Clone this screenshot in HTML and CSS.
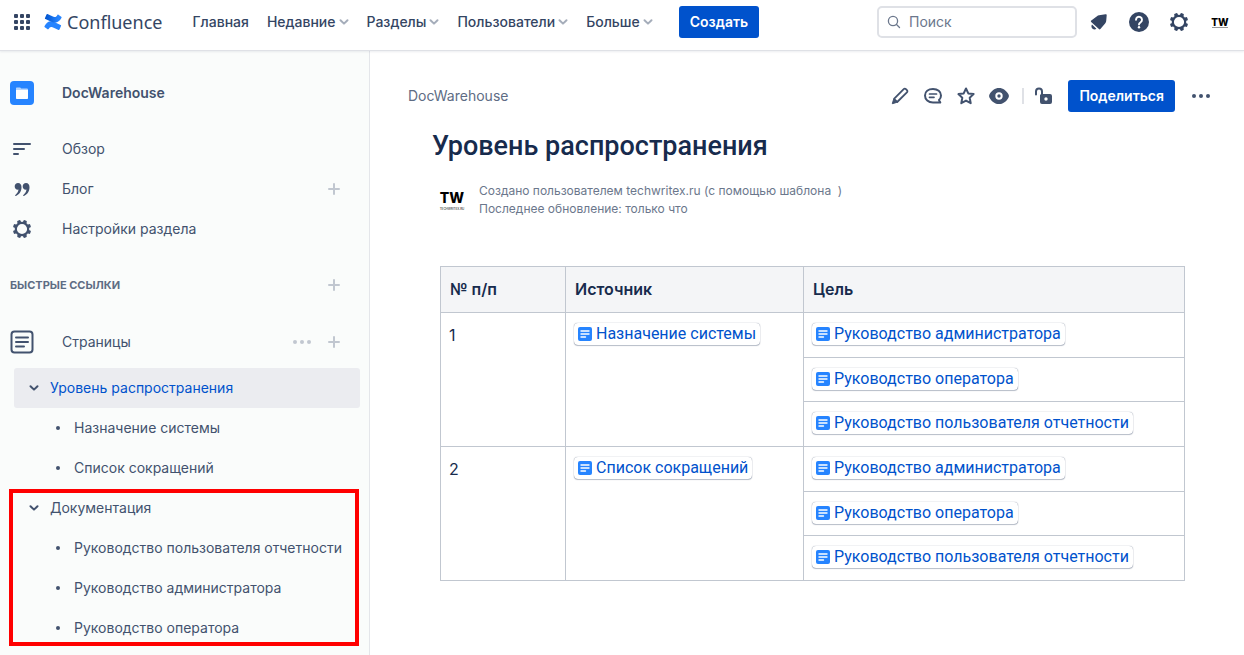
FILE: index.html
```
<!DOCTYPE html>
<html lang="ru">
<head>
<meta charset="utf-8">
<meta name="viewport" content="width=device-width, initial-scale=1">
<title>Уровень распространения – DocWarehouse – Confluence</title>
<link rel="stylesheet" href="styles.css">
</head>
<body>
<svg class="defs" aria-hidden="true">
  <symbol id="i-chevron" viewBox="0 0 10 10"><path d="M1.5 3.2 5 6.6 8.5 3.2" fill="none" stroke="currentColor" stroke-width="2" stroke-linecap="round" stroke-linejoin="round"/></symbol>
  <symbol id="i-gear" viewBox="0 0 24 24"><circle cx="12" cy="12" r="6.200" fill="none" stroke="currentColor" stroke-width="2.200"/><g fill="currentColor"><g id="teeth"><rect x="10.200" y="2.800" width="3.600" height="3.600" rx="1.100" transform="rotate(22.500 12 12)"/><rect x="10.200" y="2.800" width="3.600" height="3.600" rx="1.100" transform="rotate(67.500 12 12)"/><rect x="10.200" y="2.800" width="3.600" height="3.600" rx="1.100" transform="rotate(112.500 12 12)"/><rect x="10.200" y="2.800" width="3.600" height="3.600" rx="1.100" transform="rotate(157.500 12 12)"/></g><use href="#teeth" transform="rotate(180 12 12)"/></g></symbol>
  <symbol id="i-plus" viewBox="0 0 14 14"><path d="M7 2v10M2 7h10" stroke="currentColor" stroke-width="2" stroke-linecap="round"/></symbol>
  <symbol id="i-dots" viewBox="0 0 20 6"><g fill="currentColor"><circle cx="3" cy="3" r="2"/><circle cx="10" cy="3" r="2"/><circle cx="17" cy="3" r="2"/></g></symbol>
  <symbol id="i-page" viewBox="0 0 14 14"><rect width="14" height="14" rx="2" fill="#2684ff"/><path d="M3 4h8M3 7h8M3 10h4.5" stroke="#fff" stroke-width="1.4" stroke-linecap="round"/></symbol>
</svg>

<header class="topbar">
  <button class="icon-btn" aria-label="Приложения">
    <svg width="16" height="16" viewBox="0 0 16 16" fill="#344563"><rect width="4" height="4" rx="1"/><rect x="6" width="4" height="4" rx="1"/><rect x="12" width="4" height="4" rx="1"/><rect y="6" width="4" height="4" rx="1"/><rect x="6" y="6" width="4" height="4" rx="1"/><rect x="12" y="6" width="4" height="4" rx="1"/><rect y="12" width="4" height="4" rx="1"/><rect x="6" y="12" width="4" height="4" rx="1"/><rect x="12" y="12" width="4" height="4" rx="1"/></svg>
  </button>
  <a class="brand" href="#">
    <svg width="18" height="16" viewBox="0 0 18 16"><defs><linearGradient id="g1" x1="0" x2="1"><stop offset="0" stop-color="#0052cc"/><stop offset=".8" stop-color="#2684ff"/></linearGradient></defs><path d="M.6 11.900C3 8 5.600 6.200 10.200 8.100l6.400 2.800c.4.2.6.6.4 1l-1.500 3.600c-.2.4-.6.6-1 .4-2.200-.9-4.200-1.900-6-2.600-2-.8-2.700-.2-3.900 1.700-.3.4-.7.5-1 .3L.8 13.200c-.5-.3-.5-.8-.2-1.300z" fill="#2684ff"/><path d="M17.400 4.100C15 8 12.400 9.800 7.800 7.900L1.400 5.100c-.4-.2-.6-.6-.4-1L2.500.5c.2-.4.6-.6 1-.4 2.200.9 4.200 1.900 6 2.600 2 .8 2.700.2 3.900-1.700.3-.4.7-.5 1-.3l2.800 2.100c.5.3.5.8.2 1.300z" fill="url(#g1)"/></svg>
    <span>Confluence</span>
  </a>
  <nav class="topnav" aria-label="Основная навигация">
    <a href="#">Главная</a>
    <button>Недавние<svg class="chev"><use href="#i-chevron"/></svg></button>
    <button>Разделы<svg class="chev"><use href="#i-chevron"/></svg></button>
    <button>Пользователи<svg class="chev"><use href="#i-chevron"/></svg></button>
    <button>Больше<svg class="chev"><use href="#i-chevron"/></svg></button>
  </nav>
  <button class="primary">Создать</button>
  <div class="tools">
    <label class="search">
      <svg width="14" height="14" viewBox="0 0 14 14" fill="none" stroke="#6b778c" stroke-width="1.300" stroke-linecap="round"><circle cx="6" cy="6" r="4.600"/><path d="m9.500 9.500 3 3"/></svg>
      <input type="text" placeholder="Поиск" aria-label="Поиск">
    </label>
    <button class="icon-btn" aria-label="Уведомления"><svg width="20" height="20" viewBox="0 0 20 20" fill="currentColor"><path d="M16.500 2.200c.8-.1 1.300.3 1.200 1.100l-.5 5.700c-.1 1-.4 1.700-1.100 2.400l-4.700 5.600c-.5.600-1 .6-1.500.1L2.200 9.900c-.5-.5-.5-1 .1-1.400L8 4.200c.6-.5 1.300-.8 2.100-.9zM3 12.400l4.400 4.400c-1.100 1.100-2.800 1-3.800 0-1.200-1.100-1.600-3.200-.6-4.400z"/></svg></button>
    <button class="icon-btn" aria-label="Справка"><svg width="20" height="20" viewBox="0 0 20 20"><circle cx="10" cy="10" r="10" fill="currentColor"/><path d="M7 7.700a3 3 0 1 1 4.700 2.500c-1.100.8-1.700 1.100-1.700 2.300" fill="none" stroke="#fff" stroke-width="1.900" stroke-linecap="round"/><circle cx="10" cy="15.200" r="1.200" fill="#fff"/></svg></button>
    <button class="icon-btn" aria-label="Настройки"><svg width="24" height="24"><use href="#i-gear"/></svg></button>
    <button class="avatar avatar-small" aria-label="Профиль"><b>TW</b><i></i></button>
  </div>
</header>

<div class="layout">
  <aside class="sidebar">
    <a class="side-row space" href="#">
      <svg width="24" height="24" viewBox="0 0 24 24"><rect width="24" height="24" rx="4" fill="#2684ff"/><path d="M6 8V7.300c0-.4.3-.7.700-.7h3.500l1 1H17c.6 0 1 .3 1 .8V9H6z" fill="#b3d4ff"/><path d="M6 9h12v8c0 .6-.4 1-1 1H7c-.6 0-1-.4-1-1z" fill="#fff"/></svg>
      <span>DocWarehouse</span>
    </a>
    <nav class="side-group" aria-label="Раздел">
      <div class="side-row"><svg width="24" height="24" viewBox="0 0 24 24"><path d="M4 7h16M4 12h10M4 17h4" stroke="currentColor" stroke-width="2" stroke-linecap="round"/></svg><a href="#">Обзор</a></div>
      <div class="side-row"><svg width="24" height="24" viewBox="0 0 24 24" fill="currentColor"><path id="q" d="M8 6c2.300 0 3.500 1.700 3.500 4.300 0 4.300-2.400 7.300-5.500 8.600-.7.200-1.200-.4-.6-1 2-1.700 3-3.300 3-5.300-2.200.3-3.700-1.100-3.700-3.200S6.100 6 8 6z"/><use href="#q" x="8"/></svg><a href="#">Блог</a><button class="add" aria-label="Создать запись блога"><svg width="14" height="14"><use href="#i-plus"/></svg></button></div>
      <div class="side-row"><svg width="24" height="24"><use href="#i-gear"/></svg><a href="#">Настройки раздела</a></div>
    </nav>
    <div class="side-group side-row"><h2>Быстрые ссылки</h2><button class="add" aria-label="Добавить ссылку"><svg width="14" height="14"><use href="#i-plus"/></svg></button></div>
    <div class="side-group side-row pages">
      <svg width="24" height="24" viewBox="0 0 24 24" fill="none" stroke="currentColor" stroke-width="2" stroke-linecap="round"><rect x="1.500" y="1.500" width="21" height="21" rx="3"/><path d="M6 7.500h12M6 12h12M6 16.500h8"/></svg>
      <a href="#">Страницы</a>
      <button class="add" aria-label="Другие действия"><svg width="20" height="6"><use href="#i-dots"/></svg></button>
      <button class="add next" aria-label="Создать страницу"><svg width="14" height="14"><use href="#i-plus"/></svg></button>
    </div>
    <ul class="tree">
      <li>
        <div class="node current"><button aria-label="Свернуть"><svg class="chev"><use href="#i-chevron"/></svg></button><a href="#">Уровень распространения</a></div>
        <ul>
          <li class="node leaf"><a href="#">Назначение системы</a></li>
          <li class="node leaf"><a href="#">Список сокращений</a></li>
        </ul>
      </li>
      <li class="marked">
        <div class="node"><button aria-label="Свернуть"><svg class="chev"><use href="#i-chevron"/></svg></button><a href="#">Документация</a></div>
        <ul>
          <li class="node leaf"><a href="#">Руководство пользователя отчетности</a></li>
          <li class="node leaf"><a href="#">Руководство администратора</a></li>
          <li class="node leaf"><a href="#">Руководство оператора</a></li>
        </ul>
      </li>
    </ul>
  </aside>

  <main class="main">
    <div class="pagebar">
      <a class="crumb" href="#">DocWarehouse</a>
      <div class="actions">
        <button class="icon-btn" aria-label="Редактировать"><svg width="20" height="20" viewBox="0 0 20 20" fill="none" stroke="currentColor" stroke-width="1.800" stroke-linejoin="round"><path d="M4 12.800 13.700 3.100c.7-.7 1.500-.7 2.200 0l1 1c.7.7.7 1.500 0 2.200L7.200 16z"/><path d="M3.600 13.300 2.300 17.700l4.400-1.300z" fill="currentColor" stroke-width="1"/></svg></button>
        <button class="icon-btn" aria-label="Комментарии"><svg width="20" height="20" viewBox="0 0 20 20" fill="none" stroke="currentColor" stroke-width="2" stroke-linecap="round" stroke-linejoin="round"><path d="M10 3c4.700 0 8 2.700 8 6.500 0 1.900-.8 3.500-2 4.600l1.300 2.400H10c-4.700 0-8-2.900-8-7S5.300 3 10 3z"/><path d="M6.500 8h7M6.500 11.300h4.500" stroke-width="1.700"/></svg></button>
        <button class="icon-btn" aria-label="В избранное"><svg width="20" height="20" viewBox="0 0 20 20" fill="none" stroke="currentColor" stroke-width="2" stroke-linejoin="round"><path d="m10 2.500 2.300 4.900 5.300.7-3.900 3.700 1 5.400-4.700-2.600-4.700 2.600 1-5.400L2.400 8.100l5.300-.7z"/></svg></button>
        <button class="icon-btn" aria-label="Отслеживать"><svg width="20" height="20" viewBox="0 0 20 20"><path d="M10 2c4.200 0 7.300 2.700 9.300 6.100.8 1.300.8 2.500 0 3.800-2 3.400-5.100 6.100-9.300 6.100S2.700 15.300.7 11.900c-.8-1.300-.8-2.500 0-3.800C2.700 4.700 5.800 2 10 2z" fill="currentColor"/><circle cx="10" cy="10" r="2.700" fill="none" stroke="#fff" stroke-width="2"/></svg></button>
        <span class="divider"></span>
        <button class="icon-btn" aria-label="Ограничения"><svg width="20" height="20" viewBox="0 0 20 20"><path d="M3 8.500V5.500a3 3 0 0 1 6 0V9" fill="none" stroke="currentColor" stroke-width="2" stroke-linecap="round"/><path fill-rule="evenodd" d="M8 8h9a2 2 0 0 1 2 2v6a2 2 0 0 1-2 2H9a2 2 0 0 1-2-2V9zm5 3.300a1.700 1.700 0 1 0 0 3.400 1.700 1.700 0 0 0 0-3.400z" fill="currentColor"/></svg></button>
        <button class="primary">Поделиться</button>
        <button class="icon-btn" aria-label="Ещё"><svg width="20" height="6"><use href="#i-dots"/></svg></button>
      </div>
    </div>
    <article class="content">
      <h1>Уровень распространения</h1>
      <div class="byline">
        <div class="avatar"><b>TW</b><small>TECHWRITEX.RU</small></div>
        <p>Создано пользователем techwritex.ru (с помощью шаблона&nbsp; )<br>Последнее обновление: только что</p>
      </div>
      <table>
        <colgroup><col class="c-num"><col class="c-src"><col></colgroup>
        <thead><tr><th scope="col">№ п/п</th><th scope="col">Источник</th><th scope="col">Цель</th></tr></thead>
        <tbody>
          <tr><td rowspan="3">1</td><td rowspan="3"><a class="chip" href="#"><svg><use href="#i-page"/></svg>Назначение системы</a></td><td><a class="chip" href="#"><svg><use href="#i-page"/></svg>Руководство администратора</a></td></tr>
          <tr class="tight"><td><a class="chip" href="#"><svg><use href="#i-page"/></svg>Руководство оператора</a></td></tr>
          <tr><td><a class="chip" href="#"><svg><use href="#i-page"/></svg>Руководство пользователя отчетности</a></td></tr>
          <tr><td rowspan="3">2</td><td rowspan="3"><a class="chip" href="#"><svg><use href="#i-page"/></svg>Список сокращений</a></td><td><a class="chip" href="#"><svg><use href="#i-page"/></svg>Руководство администратора</a></td></tr>
          <tr class="tight"><td><a class="chip" href="#"><svg><use href="#i-page"/></svg>Руководство оператора</a></td></tr>
          <tr><td><a class="chip" href="#"><svg><use href="#i-page"/></svg>Руководство пользователя отчетности</a></td></tr>
        </tbody>
      </table>
    </article>
  </main>
</div>
</body>
</html>
```
FILE: styles.css
```
* { box-sizing: border-box; }
body {
  margin: 0;
  min-height: 100vh;
  display: flex;
  flex-direction: column;
  background: #fff;
  color: #172b4d;
  font: 14px/20px Inter, "Noto Sans", sans-serif;
}
h1, h2, p, ul { margin: 0; padding: 0; }
ul { list-style: none; }
a { color: inherit; text-decoration: none; }
button { font: inherit; color: inherit; background: none; border: 0; padding: 0; cursor: pointer; }
svg { display: block; flex: none; }
.defs { position: absolute; width: 0; height: 0; }

.topbar {
  position: relative;
  display: flex;
  align-items: center;
  height: 51px;
  padding: 0 12px 6px 14px;
  border-bottom: 1px solid #dfe1e6;
  box-shadow: 0 1px 2px #091e4214;
  color: #344563;
}
.icon-btn { display: flex; align-items: center; justify-content: center; }
.brand {
  display: flex;
  align-items: center;
  gap: 5px;
  margin-left: 14px;
  color: #344563;
  font: 18px/24px "Noto Sans", sans-serif;
}
.topnav { display: flex; gap: 18px; margin-left: 30px; font-weight: 500; }
.topnav button { display: flex; align-items: center; gap: 3px; font-weight: 500; }
.topnav .chev { color: #a5adba; }
.chev { width: 10px; height: 10px; }
.primary {
  height: 32px;
  padding: 0 11px;
  border-radius: 3px;
  background: #0052cc;
  color: #fff;
  font-weight: 600;
}
.topbar > .primary { margin-left: 26px; }
.tools { display: flex; align-items: center; gap: 18px; margin-left: auto; }
.tools .icon-btn { width: 22px; }
.search {
  display: flex;
  align-items: center;
  gap: 8px;
  width: 200px;
  height: 32px;
  padding: 0 8px;
  border: 2px solid #dfe1e6;
  border-radius: 5px;
}
.search + .icon-btn { margin-left: -7px; }
.search input {
  flex: 1;
  min-width: 0;
  padding: 0;
  border: 0;
  outline: 0;
  background: none;
  color: #172b4d;
  font: inherit;
}
.search input::placeholder { color: #6b778c; opacity: 1; }

.avatar {
  display: flex;
  flex-direction: column;
  align-items: center;
  width: 24px;
  color: #000;
  font: 14px/18px Inter, sans-serif;
}
.avatar b { font-weight: 800; }
.avatar small { font: 3px/4px Inter, sans-serif; }
.avatar-small { font-size: 10px; line-height: 10px; }
.avatar i { width: 16px; height: 1px; background: #999; }

.layout { flex: 1; display: flex; }
.sidebar {
  width: 370px;
  flex: none;
  padding: 22px 9px 0 10px;
  border-right: 1px solid #e4e6ea;
  background: #fafcfb;
  color: #42526e;
}
.side-row { display: flex; align-items: center; height: 40px; padding-right: 15px; }
.side-row > svg + * { margin-left: 28px; }
.side-group { margin-top: 16px; }
.space { font-weight: 600; }
.side-row h2 { font-size: 11px; line-height: 16px; font-weight: 700; text-transform: uppercase; color: #5e6c84; }
.add { margin-left: auto; padding: 4px; color: #c1c7d0; }
.next { margin-left: 7px; }
.pages { height: 42px; }
.tree { margin: 5px 0 0 4px; }
.node { display: flex; align-items: center; height: 40px; padding-left: 15px; border-radius: 3px; }
.node .chev { margin-right: 11px; }
.current { background: #ebecf0; color: #0052cc; }
.current button { color: #42526e; }
.leaf { padding-left: 42px; gap: 14px; }
.leaf::before { content: ""; width: 4px; height: 4px; border-radius: 50%; background: #42526e; }
.marked { position: relative; }
.marked::after {
  content: "";
  position: absolute;
  inset: 1px 1px 2px -5px;
  border: 4px solid #f00;
  pointer-events: none;
}

.main { flex: 1; min-width: 0; padding: 29px 33px 0 38px; }
.pagebar { display: flex; align-items: center; justify-content: space-between; }
.crumb { color: #5e6c84; }
.actions { display: flex; align-items: center; gap: 13px; color: #42526e; }
.divider { width: 2px; height: 16px; margin-right: -4px; background: #dfe1e6; }
.actions .primary { margin: 0 3px 0 2px; }
.content { padding: 16px 26px 40px 24px; }
h1 { font: 500 27px/36px Roboto, "Noto Sans", sans-serif; }
.byline { display: flex; align-items: center; gap: 15px; margin: 18px 0 48px 8px; color: #6b778c; }
.byline p { font-size: 12px; line-height: 18px; }
table {
  width: calc(100% - 8px);
  margin-left: 8px;
  border-collapse: collapse;
  table-layout: fixed;
  font-size: 16px;
  line-height: 24px;
}
.c-num { width: 125px; }
.c-src { width: 238px; }
th, td { border: 1px solid #c1c7d0; text-align: left; vertical-align: top; }
th { padding: 10px 9px 11px; background: #f4f5f7; font-weight: 600; }
td { padding: 10px 8px; }
.tight td { padding-bottom: 9px; }
.chip {
  display: inline-flex;
  align-items: center;
  gap: 4px;
  padding: 0 4px;
  border-radius: 4px;
  box-shadow: 0 0 1px #091e4290, 0 1px 1px #091e4240;
  color: #0052cc;
  font-family: Roboto, "Noto Sans", sans-serif;
  line-height: 22px;
  vertical-align: top;
}
.chip svg { width: 14px; height: 14px; }
```
